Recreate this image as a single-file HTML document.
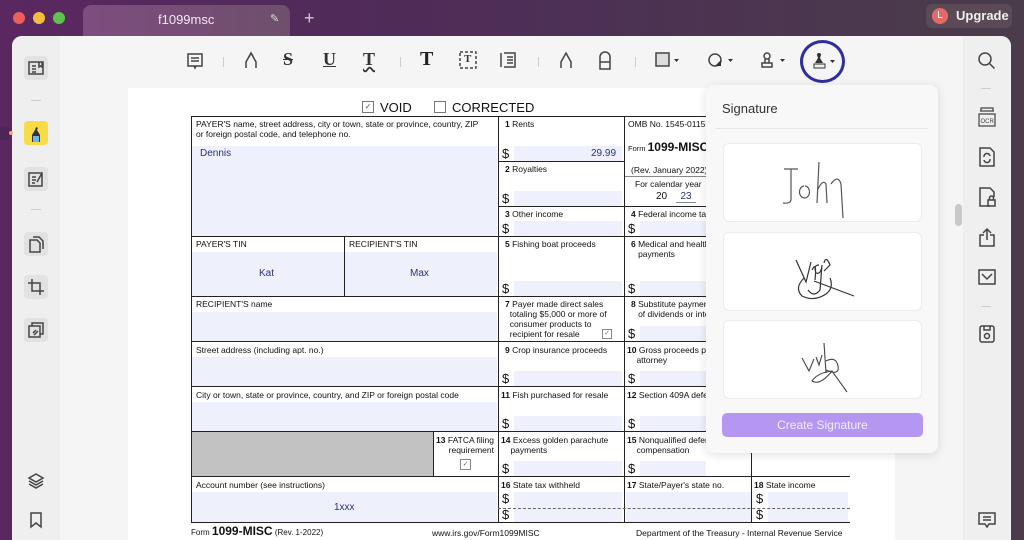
<!DOCTYPE html>
<html><head><meta charset="utf-8"><style>
*{margin:0;padding:0;box-sizing:border-box}
html,body{width:1024px;height:540px;overflow:hidden}
body{position:relative;font-family:"Liberation Sans",sans-serif;background:linear-gradient(90deg,#5a2760 0%,#4e2c58 40%,#4a3c4a 100%)}
.a{position:absolute}
.tl{position:absolute;top:12px;width:12px;height:12px;border-radius:50%}
.win{position:absolute;left:12px;top:36px;width:999px;height:504px;background:#f5f5f5;border-radius:10px 10px 0 0;overflow:hidden}
.ls{position:absolute;left:0;top:0;width:48px;height:100%;background:#efefef}
.rs{position:absolute;right:0;top:0;width:48px;height:100%;background:#efefef}
.page{position:absolute;left:116px;top:52px;width:767px;height:452px;background:#fff}
.f{position:absolute;font-size:8.5px;color:#111;line-height:10px}
.f b{font-weight:bold}
.hl{position:absolute;height:1px;background:#222}
.vl{position:absolute;width:1px;background:#222}
.fill{position:absolute;background:#eef1fb}
.d{position:absolute;font-size:13px;color:#111}
.blue{color:#2b2f80;font-size:10px;position:absolute}
.ic{position:absolute;stroke:#444;fill:none;stroke-width:1.5}
.card{position:absolute;left:17px;width:199px;height:79px;background:#fff;border:1px solid #ececec;border-radius:6px}
</style></head><body>
<div class="tl" style="left:13px;background:#ed5f5b"></div>
<div class="tl" style="left:33px;background:#f5bd3d"></div>
<div class="tl" style="left:53px;background:#5fc24f"></div>
<div class="a" style="left:83px;top:5px;width:207px;height:31px;background:linear-gradient(90deg,#7e4d7e,#6d4f6c);border-radius:8px 8px 0 0"></div>
<div class="a" style="left:158px;top:12px;color:#f2e8f2;font-size:13px">f1099msc</div>
<div class="a" style="left:270px;top:12px;color:#ddd;font-size:11px">✎</div>
<div class="a" style="left:304px;top:8px;color:#ccc;font-size:18px">+</div>
<div class="a" style="left:926px;top:4px;width:86px;height:24px;background:#5a4a56;border-radius:6px"></div>
<div class="a" style="left:932px;top:8px;width:16px;height:16px;border-radius:50%;background:#e46a6a;color:#fff;font-size:10px;text-align:center;line-height:16px">L</div>
<div class="a" style="left:956px;top:8px;color:#eee;font-size:13px;font-weight:bold">Upgrade</div>

<div class="win">
<div class="ls"></div><div class="rs"></div>
<div class="page"></div>
<div class="a" style="left:943px;top:168px;width:7px;height:22px;background:#c8c8c8;border-radius:4px"></div>
</div>
<div class="a" style="left:0;top:126px;width:12px;height:14px;background:#4e2656;border-radius:0 8px 8px 0"></div>
<div class="a" style="left:9px;top:131px;width:4px;height:4px;background:#f3a574;border-radius:50%"></div>

<!-- left icons -->
<div class="a" style="left:24px;top:56px;width:24px;height:24px;background:#e2e2e2;border-radius:4px"></div>
<svg class="ic" style="left:27px;top:59px" width="18" height="18"><rect x="2" y="3" width="14" height="12"/><path d="M5 7h4M5 10h4M5 13h4M12 3v5l1.5-1 1.5 1V3"/></svg>
<div class="a" style="left:31px;top:100px;width:10px;height:1px;background:#ccc"></div>
<div class="a" style="left:24px;top:121px;width:24px;height:24px;background:#f7dc48;border-radius:4px"></div>
<svg class="a" style="left:27px;top:123px" width="18" height="22"><path d="M5 19V12l3-5 1-3 2 1-1 2 3 5v7z" fill="#333"/><rect x="6" y="13" width="6" height="6" fill="#6cb7e6"/></svg>
<div class="a" style="left:24px;top:167px;width:24px;height:24px;background:#e2e2e2;border-radius:4px"></div>
<svg class="ic" style="left:27px;top:170px" width="18" height="18"><rect x="2" y="3" width="13" height="13"/><path d="M5 7h4M5 10h4M5 13h3M10 12l5-9"/></svg>
<div class="a" style="left:31px;top:209px;width:10px;height:1px;background:#ccc"></div>
<div class="a" style="left:24px;top:232px;width:24px;height:24px;background:#e2e2e2;border-radius:4px"></div>
<svg class="ic" style="left:27px;top:235px" width="18" height="18"><path d="M3 5h7l3 3v9H3zM6 2h6l4 4v8"/></svg>
<div class="a" style="left:24px;top:275px;width:24px;height:24px;background:#e2e2e2;border-radius:4px"></div>
<svg class="ic" style="left:27px;top:278px" width="18" height="18"><path d="M5 1v12h12M1 5h12v12"/></svg>
<div class="a" style="left:24px;top:318px;width:24px;height:24px;background:#e2e2e2;border-radius:4px"></div>
<svg class="ic" style="left:27px;top:321px" width="18" height="18"><rect x="2" y="5" width="11" height="11"/><path d="M5 5V2h11v11h-3M6 12l3-3M7 14l4-4"/></svg>
<svg class="ic" style="left:27px;top:471px" width="18" height="18"><path d="M9 3l7 4-7 4-7-4zM2 10l7 4 7-4M2 13l7 4 7-4"/></svg>
<svg class="ic" style="left:28px;top:511px" width="16" height="18"><path d="M3 2h10v14l-5-4-5 4z"/></svg>

<!-- toolbar -->
<svg class="ic" style="left:186px;top:52px" width="18" height="18"><rect x="2" y="2" width="14" height="12"/><path d="M5 6h8M5 9h8M8 14l1 2 1-2"/></svg>
<div class="a" style="left:223px;top:57px;width:1px;height:10px;background:#ccc"></div>
<svg class="ic" style="left:242px;top:50px" width="18" height="20"><path d="M4 18v-6l5-9 5 9v6M7 7l2-4 2 3" /></svg>
<div class="a" style="left:283px;top:49px;font:bold 18px 'Liberation Serif',serif;color:#333;text-decoration:line-through">S</div>
<div class="a" style="left:323px;top:49px;font:bold 18px 'Liberation Serif',serif;color:#333;text-decoration:underline">U</div>
<div class="a" style="left:363px;top:49px;font:bold 18px 'Liberation Serif',serif;color:#333;text-decoration:underline wavy">T</div>
<div class="a" style="left:400px;top:57px;width:1px;height:10px;background:#ccc"></div>
<div class="a" style="left:420px;top:48px;font:bold 20px 'Liberation Serif',serif;color:#222">T</div>
<svg class="ic" style="left:459px;top:51px" width="18" height="18"><rect x="1" y="1" width="16" height="16" stroke-dasharray="3 2"/></svg>
<div class="a" style="left:464px;top:53px;font:bold 11px 'Liberation Serif',serif;color:#333">T</div>
<svg class="ic" style="left:499px;top:51px" width="18" height="18"><path d="M2 2v14M5 2h11v14H5M8 6h6M8 9h6M8 12h6"/></svg>
<div class="a" style="left:538px;top:57px;width:1px;height:10px;background:#ccc"></div>
<svg class="ic" style="left:557px;top:50px" width="18" height="20"><path d="M4 18v-6l5-9 5 9v6"/></svg>
<svg class="ic" style="left:596px;top:51px" width="18" height="20"><path d="M4 18V6a5 5 0 0 1 10 0v12zM4 11h10"/></svg>
<div class="a" style="left:635px;top:57px;width:1px;height:10px;background:#ccc"></div>
<svg class="ic" style="left:655px;top:52px" width="26" height="16"><rect x="1" y="1" width="13" height="13" fill="#ddd"/><path d="M19 7h5l-2.5 3z" fill="#333" stroke="none"/></svg>
<svg class="ic" style="left:707px;top:52px" width="28" height="16"><circle cx="8" cy="8" r="6"/><path d="M8 14l6-6 0 6z" fill="#333" stroke="none"/><path d="M21 7h5l-2.5 3z" fill="#333" stroke="none"/></svg>
<svg class="ic" style="left:759px;top:51px" width="28" height="18"><circle cx="8" cy="5" r="3"/><path d="M3 12h10v4H3zM6 8v4M10 8v4"/><path d="M21 8h5l-2.5 3z" fill="#333" stroke="none"/></svg>
<div class="a" style="left:800px;top:40px;width:45px;height:43px;border:3px solid #2d2f9e;border-radius:50%"></div>
<svg class="a" style="left:810px;top:51px" width="28" height="20"><path d="M9 2a2 2 0 0 1 2 2l-1 3 3 5H5l3-5-1-3a2 2 0 0 1 2-2z" fill="#333"/><rect x="4" y="13" width="11" height="4" fill="#eee" stroke="#333"/><path d="M20 9h5l-2.5 3z" fill="#333"/></svg>

<!-- right icons -->
<svg class="ic" style="left:977px;top:51px" width="20" height="20"><circle cx="8" cy="8" r="6"/><path d="M12.5 12.5l5 5"/></svg>
<div class="a" style="left:981px;top:88px;width:10px;height:1px;background:#ccc"></div>
<svg class="ic" style="left:977px;top:106px;stroke-width:1.2" width="20" height="22"><path d="M3 5h14M4 5V2h12v3M2 8h16v12H2z"/><text x="3.5" y="17" font-size="6" fill="#444" stroke="none" font-family="Liberation Sans">OCR</text></svg>
<svg class="ic" style="left:978px;top:147px" width="18" height="20"><path d="M2 1h10l4 4v14H2z"/><path d="M6 10a3 3 0 0 1 6-1M12 12a3 3 0 0 1-6 1"/></svg>
<svg class="ic" style="left:978px;top:187px" width="18" height="20"><path d="M12 19H2V1h10l4 4v5"/><rect x="10" y="13" width="7" height="6"/><path d="M11.5 13v-2a2 2 0 0 1 4 0v2"/></svg>
<svg class="ic" style="left:978px;top:227px" width="18" height="20"><path d="M6 8H2v11h14V8h-4M9 13V2M5 6l4-4 4 4"/></svg>
<svg class="ic" style="left:977px;top:268px" width="20" height="18"><rect x="2" y="2" width="16" height="14"/><path d="M5 6l5 5 5-5"/></svg>
<div class="a" style="left:981px;top:306px;width:10px;height:1px;background:#ccc"></div>
<svg class="ic" style="left:978px;top:324px" width="18" height="20"><rect x="2" y="2" width="14" height="16" rx="2"/><path d="M6 2v4h6V2"/><circle cx="9" cy="12" r="2.5"/></svg>
<svg class="ic" style="left:977px;top:511px" width="20" height="18"><path d="M2 2h16v11h-6l-2 3-2-3H2zM6 6h8M6 9h8"/></svg>

<!-- form -->
<div class="a" style="left:362px;top:101px;width:12px;height:12px;border:1px solid #777;font-size:8px;text-align:center;line-height:10px;color:#555">✓</div>
<div class="a" style="left:380px;top:100px;font-size:13px;color:#111">VOID</div>
<div class="a" style="left:434px;top:101px;width:12px;height:12px;border:1px solid #777"></div>
<div class="a" style="left:452px;top:100px;font-size:13px;color:#111">CORRECTED</div>

<div class="fill" style="left:192px;top:146px;width:305px;height:90px"></div>
<div class="fill" style="left:192px;top:252px;width:152px;height:44px"></div>
<div class="fill" style="left:345px;top:252px;width:152px;height:44px"></div>
<div class="fill" style="left:192px;top:312px;width:305px;height:29px"></div>
<div class="fill" style="left:192px;top:357px;width:305px;height:29px"></div>
<div class="fill" style="left:192px;top:402px;width:305px;height:29px"></div>
<div class="a" style="left:192px;top:432px;width:241px;height:44px;background:#c2c2c2"></div>
<div class="fill" style="left:192px;top:492px;width:305px;height:30px"></div>
<div class="fill" style="left:514px;top:146px;width:108px;height:15px"></div>
<div class="fill" style="left:514px;top:191px;width:108px;height:15px"></div>
<div class="fill" style="left:514px;top:221px;width:108px;height:15px"></div>
<div class="fill" style="left:514px;top:281px;width:108px;height:15px"></div>
<div class="fill" style="left:514px;top:371px;width:108px;height:15px"></div>
<div class="fill" style="left:514px;top:416px;width:108px;height:15px"></div>
<div class="fill" style="left:514px;top:461px;width:108px;height:15px"></div>
<div class="fill" style="left:514px;top:492px;width:108px;height:30px"></div>
<div class="fill" style="left:640px;top:221px;width:66px;height:15px"></div>
<div class="fill" style="left:640px;top:281px;width:66px;height:15px"></div>
<div class="fill" style="left:640px;top:326px;width:66px;height:15px"></div>
<div class="fill" style="left:640px;top:371px;width:66px;height:15px"></div>
<div class="fill" style="left:640px;top:416px;width:66px;height:15px"></div>
<div class="fill" style="left:640px;top:461px;width:66px;height:15px"></div>
<div class="fill" style="left:626px;top:492px;width:125px;height:30px"></div>
<div class="fill" style="left:768px;top:492px;width:80px;height:30px"></div>

<div class="hl" style="left:191px;top:116px;width:515px"></div>
<div class="hl" style="left:191px;top:236px;width:515px"></div>
<div class="hl" style="left:191px;top:296px;width:515px"></div>
<div class="hl" style="left:191px;top:341px;width:515px"></div>
<div class="hl" style="left:191px;top:386px;width:515px"></div>
<div class="hl" style="left:191px;top:431px;width:515px"></div>
<div class="hl" style="left:191px;top:476px;width:659px"></div>
<div class="hl" style="left:191px;top:522px;width:659px"></div>
<div class="hl" style="left:498px;top:161px;width:126px"></div>
<div class="hl" style="left:498px;top:206px;width:208px"></div>
<div class="hl" style="left:624px;top:176px;width:82px;background:#888"></div>
<div class="vl" style="left:191px;top:116px;height:406px"></div>
<div class="vl" style="left:344px;top:236px;height:60px"></div>
<div class="vl" style="left:498px;top:116px;height:406px"></div>
<div class="vl" style="left:624px;top:116px;height:406px"></div>
<div class="vl" style="left:433px;top:431px;height:45px"></div>
<div class="vl" style="left:751px;top:453px;height:69px"></div>
<div class="a" style="left:498px;top:508px;width:352px;border-top:1px dashed #666"></div>

<div class="f" style="left:196px;top:119px">PAYER'S name, street address, city or town, state or province, country, ZIP<br>or foreign postal code, and telephone no.</div>
<div class="blue" style="left:200px;top:148px">Dennis</div>
<div class="f" style="left:196px;top:239px">PAYER'S TIN</div>
<div class="f" style="left:349px;top:239px">RECIPIENT'S TIN</div>
<div class="blue" style="left:259px;top:268px">Kat</div>
<div class="blue" style="left:410px;top:268px">Max</div>
<div class="f" style="left:196px;top:299px">RECIPIENT'S name</div>
<div class="f" style="left:196px;top:345px">Street address (including apt. no.)</div>
<div class="f" style="left:196px;top:390px">City or town, state or province, country, and ZIP or foreign postal code</div>
<div class="f" style="left:436px;top:435px;text-align:right;width:58px"><b>13</b> FATCA filing requirement</div>
<div class="a" style="left:460px;top:459px;width:11px;height:11px;border:1px solid #888;font-size:7px;text-align:center;line-height:9px;color:#666">✓</div>
<div class="f" style="left:196px;top:480px">Account number (see instructions)</div>
<div class="blue" style="left:334px;top:502px">1xxx</div>

<div class="f" style="left:505px;top:119px"><b>1</b> Rents</div>
<div class="d" style="left:502px;top:146px">$</div>
<div class="blue" style="left:591px;top:148px">29.99</div>
<div class="f" style="left:505px;top:164px"><b>2</b> Royalties</div>
<div class="d" style="left:502px;top:191px">$</div>
<div class="f" style="left:505px;top:209px"><b>3</b> Other income</div>
<div class="d" style="left:502px;top:221px">$</div>
<div class="f" style="left:505px;top:239px"><b>5</b> Fishing boat proceeds</div>
<div class="d" style="left:502px;top:281px">$</div>
<div class="f" style="left:505px;top:299px"><b>7</b> Payer made direct sales<br>&nbsp;&nbsp;totaling $5,000 or more of<br>&nbsp;&nbsp;consumer products to<br>&nbsp;&nbsp;recipient for resale</div>
<div class="a" style="left:602px;top:329px;width:10px;height:10px;border:1px solid #888;font-size:7px;text-align:center;line-height:8px;color:#666">✓</div>
<div class="f" style="left:505px;top:345px"><b>9</b> Crop insurance proceeds</div>
<div class="d" style="left:502px;top:371px">$</div>
<div class="f" style="left:501px;top:390px"><b>11</b> Fish purchased for resale</div>
<div class="d" style="left:502px;top:416px">$</div>
<div class="f" style="left:501px;top:435px"><b>14</b> Excess golden parachute<br>&nbsp;&nbsp;&nbsp;&nbsp;payments</div>
<div class="d" style="left:502px;top:461px">$</div>
<div class="f" style="left:501px;top:480px"><b>16</b> State tax withheld</div>
<div class="d" style="left:502px;top:491px">$</div>
<div class="d" style="left:502px;top:507px">$</div>

<div class="f" style="left:628px;top:119px">OMB No. 1545-0115</div>
<div class="a" style="left:628px;top:140px;font-size:7.5px;color:#111">Form <b style="font-size:12px">1099-MISC</b></div>
<div class="f" style="left:631px;top:165px">(Rev. January 2022)</div>
<div class="f" style="left:635px;top:179px">For calendar year</div>
<div class="a" style="left:656px;top:191px;font-size:10px;color:#111">20</div>
<div class="blue" style="left:676px;top:191px;border-bottom:1px solid #888;width:20px;text-align:center">23</div>
<div class="f" style="left:631px;top:209px"><b>4</b> Federal income tax</div>
<div class="d" style="left:628px;top:221px">$</div>
<div class="f" style="left:631px;top:239px"><b>6</b> Medical and health<br>&nbsp;&nbsp;&nbsp;payments</div>
<div class="d" style="left:628px;top:281px">$</div>
<div class="f" style="left:631px;top:299px"><b>8</b> Substitute payments<br>&nbsp;&nbsp;&nbsp;of dividends or interest</div>
<div class="d" style="left:628px;top:326px">$</div>
<div class="f" style="left:627px;top:345px"><b>10</b> Gross proceeds paid<br>&nbsp;&nbsp;&nbsp;&nbsp;attorney</div>
<div class="d" style="left:628px;top:371px">$</div>
<div class="f" style="left:627px;top:390px"><b>12</b> Section 409A deferrals</div>
<div class="d" style="left:628px;top:416px">$</div>
<div class="f" style="left:627px;top:435px"><b>15</b> Nonqualified deferred<br>&nbsp;&nbsp;&nbsp;&nbsp;compensation</div>
<div class="d" style="left:628px;top:461px">$</div>
<div class="f" style="left:627px;top:480px"><b>17</b> State/Payer's state no.</div>
<div class="f" style="left:754px;top:480px"><b>18</b> State income</div>
<div class="d" style="left:756px;top:491px">$</div>
<div class="d" style="left:756px;top:507px">$</div>

<div class="a" style="left:191px;top:524px;font-size:8px;color:#111">Form <b style="font-size:12px">1099-MISC</b> (Rev. 1-2022)</div>
<div class="f" style="left:432px;top:528px">www.irs.gov/Form1099MISC</div>
<div class="f" style="left:636px;top:528px">Department of the Treasury - Internal Revenue Service</div>

<div class="a" style="left:706px;top:85px;width:232px;height:368px;background:#f8f8f8;border-radius:8px;box-shadow:0 2px 10px rgba(0,0,0,.12)">
<div class="a" style="left:16px;top:16px;font-size:13px;color:#333">Signature</div>
<div class="a" style="left:10px;top:43px;width:212px;height:1px;background:#e6e6e6"></div>
<div class="card" style="top:58px"><svg width="199" height="79" fill="none" stroke="#555" stroke-width="1.2"><path d="M60 25h14M67 25v30q0 5-8 4M80 42a5 6 0 1 0 1 0M95 18l-2 41M94 45q5-10 8-5l1 19M107 40q7-10 10 0l2 34"/></svg></div>
<div class="card" style="top:147px"><svg width="199" height="79" fill="none" stroke="#333" stroke-width="1.2"><path d="M72 27l10 22 5-20M88 37q5-10 3 10M95 32q-6 0-3 8 5 2 6-8l-2 25q-6 8-12 0M100 30q2-8 6 2l-6 6M80 45q-10 10-2 18 12 6 24-2 8-6 4-16M90 48l40 15"/></svg></div>
<div class="card" style="top:235px"><svg width="199" height="79" fill="none" stroke="#444" stroke-width="1.1"><path d="M78 37l7 13 5-12M92 36l3 8 3-10M100 22l2 30M102 40q10-5 12 5t-12 4M108 50q-15 2-20 10 8 5 20-10l15 21"/></svg></div>
<div class="a" style="left:16px;top:328px;width:201px;height:24px;background:#b597f2;border-radius:5px;color:#f3ecff;font-size:12px;text-align:center;line-height:24px">Create Signature</div>
</div>
</body></html>
